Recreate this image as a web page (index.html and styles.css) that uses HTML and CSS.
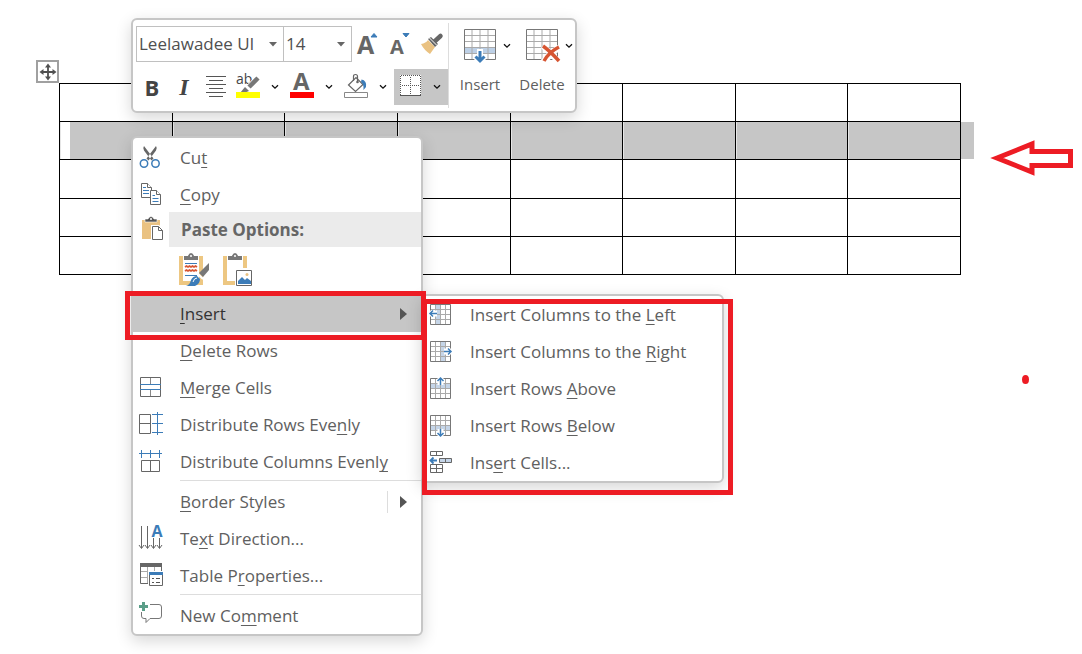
FILE: index.html
```html
<!DOCTYPE html>
<html lang="en">
<head>
<meta charset="utf-8">
<meta name="viewport" content="width=device-width, initial-scale=1">
<title>Insert rows and columns</title>
<link rel="stylesheet" href="styles.css">
</head>
<body>
<svg class="defs" aria-hidden="true">
  <symbol id="chev" viewBox="0 0 8 6"><path d="M1 1.2L4 4.2L7 1.2" fill="none" stroke="#111" stroke-width="1.300"/></symbol>
  <symbol id="tri" viewBox="0 0 8 5"><path d="M0 0H8L4 4.5Z" fill="#666"/></symbol>
  <symbol id="sub" viewBox="0 0 7 12"><path d="M0 0L7 6L0 12Z" fill="#555"/></symbol>
  <symbol id="grid" viewBox="0 0 24 24"><path d="M6.5 2V22M11.5 2V22M16.5 2V22M1 6.500H22M1 11.500H22M1 16.500H22" stroke="#aaa" fill="none"/><path d="M1.500 1.500H21.500V21.500H1.500Z" stroke="#777" fill="none"/></symbol>
</svg>

<main class="document">
  <table class="sheet" aria-label="Document table">
    <tbody>
      <tr><td></td><td></td><td></td><td></td><td></td><td></td><td></td><td></td></tr>
      <tr class="selected"><td></td><td></td><td></td><td></td><td></td><td></td><td></td><td></td></tr>
      <tr class="tall"><td></td><td></td><td></td><td></td><td></td><td></td><td></td><td></td></tr>
      <tr><td></td><td></td><td></td><td></td><td></td><td></td><td></td><td></td></tr>
      <tr><td></td><td></td><td></td><td></td><td></td><td></td><td></td><td></td></tr>
    </tbody>
  </table>
  <button class="move-handle" aria-label="Move table">
    <svg width="18" height="18" viewBox="0 0 18 18"><path d="M9 2V16M2 9H16" stroke="#505050" stroke-width="1.800"/><path d="M9 .5L12 4.500H6ZM9 17.500L12 13.500H6ZM.5 9L4.500 6V12ZM17.500 9L13.500 6V12Z" fill="#505050"/></svg>
  </button>
  <button class="size-handle" aria-label="Resize table"></button>
</main>

<section class="mini-toolbar" role="toolbar" aria-label="Formatting">
  <div class="format">
    <div class="format-row">
      <label class="combo combo-font"><select aria-label="Font"><option>Leelawadee UI</option></select><svg width="8" height="5"><use href="#tri"/></svg></label>
      <label class="combo combo-size"><select aria-label="Font size"><option>14</option></select><svg width="8" height="5"><use href="#tri"/></svg></label>
      <button class="tool" aria-label="Grow font"><svg width="24" height="24" viewBox="0 0 24 24"><text x="1" y="22" class="letter" font-size="25">A</text><path d="M15 5L18 1.500L21 5Z" fill="#3c7cb8" stroke="#3c7cb8"/></svg></button>
      <button class="tool" aria-label="Shrink font"><svg width="24" height="24" viewBox="0 0 24 24"><text x="2" y="22" class="letter" font-size="20">A</text><path d="M15 1.500H21L18 5Z" fill="#3c7cb8" stroke="#3c7cb8"/></svg></button>
      <button class="tool" aria-label="Format painter"><svg width="24" height="24" viewBox="0 0 24 24"><path d="M1 12Q6 11 8 8L15 15L10 22Q4 18 1 12Z" fill="#eac282"/><path d="M8 7L11 5L18 12L15 15Z" fill="#666"/><path d="M14 10L20.500 4" stroke="#666" stroke-width="4.500" stroke-linecap="round"/><path d="M9.500 6L16.500 13" stroke="#fff" stroke-width="1"/></svg></button>
    </div>
    <div class="format-row">
      <button class="tool bold" aria-label="Bold">B</button>
      <button class="tool italic" aria-label="Italic">I</button>
      <button class="tool" aria-label="Center"><svg width="20" height="22" viewBox="0 0 20 22"><path d="M0 .5H20M3 4.500H17M0 8.500H20M3 12.500H17M0 16.500H20M3 20.500H17" stroke="#555"/></svg></button>
      <button class="split" aria-label="Highlight color"><svg width="26" height="26" viewBox="0 0 26 26"><text x="1" y="10" font-size="14" fill="#444" font-family="Open Sans, sans-serif">ab</text><path d="M13 14L23.500 3.500" stroke="#fff" stroke-width="6"/><path d="M14 13L23 4" stroke="#777" stroke-width="4.500"/><path d="M10 13L14 17L9 19H5Z" fill="#777"/><path d="M10 11L16 17" stroke="#fff"/><path d="M1 18H25V24H1Z" fill="#ff0"/></svg><svg width="8" height="6"><use href="#chev"/></svg></button>
      <button class="split" aria-label="Font color"><svg width="26" height="26" viewBox="0 0 26 26"><text x="4" y="16" class="letter" font-size="24">A</text><path d="M1 18H25V24H1Z" fill="#f00"/></svg><svg width="8" height="6"><use href="#chev"/></svg></button>
      <button class="split" aria-label="Shading"><svg width="26" height="26" viewBox="0 0 26 26"><path d="M5.500 11L13 3.500L20 10.500L12.500 17.500Z" fill="#fff" stroke="#666" stroke-width="1.200"/><path d="M10.500 7V2.500Q10.500 .5 12.500 .5T14.500 2.500V7" fill="none" stroke="#666" stroke-width="1.200"/><circle cx="14.500" cy="8" r="1.300" fill="#666"/><path d="M18.500 5.500Q24 6.500 23 13L20.500 16Q21 10 18 8Z" fill="#3c7cb8"/><path d="M1.500 18.500H24.500V23.500H1.500Z" fill="#fff" stroke="#888"/></svg><svg width="8" height="6"><use href="#chev"/></svg></button>
      <button class="split active" aria-label="Borders"><svg width="26" height="26" viewBox="0 0 26 26"><path d="M3 1H24V22H3Z" fill="#fff"/><path d="M3.500 21V1.500H23.500V21M13.500 3V21M5 11.500H23" fill="none" stroke="#555" stroke-dasharray="1 1"/><path d="M3 21.500H24" stroke="#555"/></svg><svg width="8" height="6"><use href="#chev"/></svg></button>
    </div>
  </div>
  <div class="table-tools">
    <button class="large"><span class="large-icon"><svg width="34" height="36" viewBox="0 0 34 36"><path d="M1 19.500H33V25.500H1Z" fill="#bdd0e6"/><path d="M9 2V32M17 2V32M25 2V32M1 7.500H33M1 13.500H33M1 19.500H33M1 25.500H33" stroke="#aaa"/><path d="M1.500 1.500H32.500V31.500H1.500Z" fill="none" stroke="#777"/><path d="M17 21V34M12 28L17 33L22 28" fill="none" stroke="#fff" stroke-width="6"/><path d="M17 23V33M12.500 28.500L17 33L21.500 28.500" fill="none" stroke="#3c7cb8" stroke-width="3"/></svg><svg width="8" height="6"><use href="#chev"/></svg></span><span>Insert</span></button>
    <button class="large"><span class="large-icon"><svg width="34" height="36" viewBox="0 0 34 36"><path d="M9 2V32M17 2V32M25 2V32M1 7.500H33M1 13.500H33M1 19.500H33M1 25.500H33" stroke="#aaa"/><path d="M1.500 1.500H32.500V31.500H1.500Z" fill="none" stroke="#777"/><path d="M18 18L34 34M34 19L18 34" stroke="#fff" stroke-width="6"/><path d="M18 18Q25 23 34 33M34 19Q24 24 19 33" fill="none" stroke="#d65532" stroke-width="3.500"/></svg><svg width="8" height="6"><use href="#chev"/></svg></span><span>Delete</span></button>
  </div>
</section>

<nav class="menu context-menu" aria-label="Table menu">
  <button class="item"><svg class="icon" viewBox="0 0 24 24"><path d="M5 0Q3.500 2 5 4.500L12.500 14.500L14.500 12.500ZM17 0Q18.500 2 17 4.500L9.500 14.500L7.500 12.500Z" fill="#666"/><circle cx="5" cy="17.500" r="3.700" fill="#fff" stroke="#3c7cb8" stroke-width="1.500"/><circle cx="16.500" cy="17.500" r="3.700" fill="#fff" stroke="#3c7cb8" stroke-width="1.500"/></svg><span>Cu<u>t</u></span></button>
  <button class="item"><svg class="icon" viewBox="0 0 24 24"><g fill="#fff" stroke="#666"><path d="M2.500 .5H8.500L12.500 4.500V14.500H2.500Z"/><path d="M8.500 .5V4.500H12.500" /><path d="M11.500 7.500H17.500L21.500 11.500V21.500H11.500Z"/><path d="M17.500 7.500V11.500H21.500"/></g><path d="M4 4.500H7M4 7.500H10M4 10.500H10M13.500 12.500H16M13.500 15.500H19.500M13.500 18.500H19.500" stroke="#3c7cb8"/></svg><span><u>C</u>opy</span></button>
  <div class="heading"><svg class="icon" viewBox="0 0 24 24"><path d="M3 2H21V21H3Z" fill="#eac282"/><path d="M6 4V1H9Q10-1.500 12-1.500T15 1H18V4Z" fill="#555" stroke="#fff" stroke-width=".6"/><circle cx="12" cy="1" r="1" fill="#fff"/><path d="M12 7H20L25 12V24H12Z" fill="#fff"/><path d="M13.500 8.500H19.500L23.500 12.500V21.500H13.500Z" fill="#fff" stroke="#666"/><path d="M19.500 8.500V12.500H23.500" fill="none" stroke="#666"/></svg><h2>Paste Options:</h2></div>
  <div class="paste-options">
    <button aria-label="Keep source formatting"><svg width="32" height="36" viewBox="0 0 32 36"><path d="M2 5H22V30H2Z" fill="#fff" stroke="#edc782" stroke-width="4"/><path d="M4 2H20V8H4Z" fill="#fff"/><path d="M5 7V3H9Q10 0 12 0T15 3H19V7Z" fill="#777"/><circle cx="12" cy="3" r="1" fill="#fff"/><path d="M6 10.500H18M6 22.500H18" stroke="#3c7cb8"/><path d="M6 14L7.500 13L9 14L10.500 13L12 14L13.500 13L15 14L16.500 13L18 14M6 18L7.500 17L9 18L10.500 17L12 18L13.500 17L15 18L16.500 17L18 18" fill="none" stroke="#d65532" stroke-width="1.800"/><path d="M30 10V17L24 24L20 20Z" fill="#777"/><path d="M18 20L24 26" stroke="#fff" stroke-width="2"/><path d="M7 33Q11 32 12 27Q14 23 18 23L21 26Q21 31 16 33Z" fill="#3c7cb8"/><path d="M14 29Q15 25 18 25" fill="none" stroke="#fff"/></svg></button>
    <button aria-label="Picture"><svg width="32" height="36" viewBox="0 0 32 36"><path d="M2 5H22V30H2Z" fill="#fff" stroke="#edc782" stroke-width="4"/><path d="M4 2H20V8H4Z" fill="#fff"/><path d="M5 7V3H9Q10 0 12 0T15 3H19V7Z" fill="#777"/><circle cx="12" cy="3" r="1" fill="#fff"/><path d="M12 15H32V34H12Z" fill="#fff"/><path d="M13.500 17.500H28.500V32.500H13.500Z" fill="#fff" stroke="#666"/><path d="M15 31V28L19 24L22 27L24 25L28 28V31Z" fill="#3c7cb8"/><circle cx="24" cy="21.500" r="1.500" fill="#eac282"/></svg></button>
  </div>
  <button class="item open" aria-haspopup="menu" aria-expanded="true"><span class="icon"></span><span><u>I</u>nsert</span><svg class="arrow" width="7" height="12"><use href="#sub"/></svg></button>
  <button class="item"><span class="icon"></span><span><u>D</u>elete Rows</span></button>
  <button class="item"><svg class="icon" viewBox="0 0 24 24"><path d="M1.500 1.500H21.500V20.500H1.500Z" fill="none" stroke="#666"/><path d="M11.500 2V8M11.500 14V20" stroke="#888"/><path d="M1 8.500H22M1 13.500H22" stroke="#3c7cb8"/></svg><span><u>M</u>erge Cells</span></button>
  <button class="item"><svg class="icon" viewBox="0 0 24 24"><path d="M.5 1.500H11.500V20.500H.5ZM.5 10.500H12" fill="none" stroke="#666"/><path d="M18.500 -1V22M13 1.500H24M13 10.500H24M13 19.500H24" stroke="#3c7cb8"/></svg><span>Distribute Rows Eve<u>n</u>ly</span></button>
  <button class="item"><svg class="icon" viewBox="0 0 24 24"><path d="M2.500 10.500H20.500V21.500H2.500ZM11.500 10.500V21.500" fill="none" stroke="#666"/><path d="M0 3.500H23M2.500 0V8M11.500 0V8M20.500 0V8" stroke="#3c7cb8"/></svg><span>Distribute Columns Evenl<u>y</u></span></button>
  <hr>
  <button class="item split-item"><span class="icon"></span><span><u>B</u>order Styles</span><svg class="arrow" width="7" height="12"><use href="#sub"/></svg></button>
  <button class="item"><svg class="icon" viewBox="0 0 24 24"><path d="M2.500 -1V21M8.500 -1V21M14.500 11V21M20.500 11V21M0 18L2.500 21.500L5 18M6 18L8.500 21.500L11 18M12 18L14.500 21.500L17 18M18 18L20.500 21.500L23 18" fill="none" stroke="#666"/><text x="12.500" y="10" font-size="16" font-weight="700" font-family="Open Sans, sans-serif" fill="#3c7cb8">A</text></svg><span>Te<u>x</u>t Direction...</span></button>
  <button class="item"><svg class="icon" viewBox="0 0 24 24"><path d="M1 7.500H22M1 13.500H10M8.500 3V19M15.500 3V9" stroke="#aaa"/><path d="M1.500 -.5H22.500V19.500H1.500Z" fill="none" stroke="#666"/><path d="M1 -1H23V3H1Z" fill="#666"/><path d="M9 7H24V23H9Z" fill="#fff"/><path d="M10.500 8.500H23.500V21.500H10.500Z" fill="#fff" stroke="#666"/><path d="M10 8H24V11H10Z" fill="#3c7cb8"/><path d="M13 14.500H15M17 14.500H21M13 18.500H15M17 18.500H21" stroke="#555"/></svg><span>Table P<u>r</u>operties...</span></button>
  <hr>
  <button class="item"><svg class="icon" viewBox="0 0 24 24"><path d="M11 .5H20Q22.500 .5 22.500 3V12Q22.500 14.500 20 14.500H11L7 18.500V14.500H5Q2.500 14.500 2.500 12V8" fill="none" stroke="#777"/><path d="M4.500-2V7M0 2.500H9" stroke="#5a9e88" stroke-width="3"/></svg><span>New Co<u>m</u>ment</span></button>
</nav>

<nav class="menu submenu" aria-label="Insert">
  <button class="item"><svg class="icon" viewBox="0 0 24 24"><path d="M7 2H12V22H7Z" fill="#c5d5e8"/><use href="#grid"/><path d="M0 10.500H8" stroke="#fff" stroke-width="6"/><path d="M8 10.500H1M4 7.500L1 10.500L4 13.500" fill="none" stroke="#3c7cb8" stroke-width="1.500"/></svg><span>Insert Columns to the <u>L</u>eft</span></button>
  <button class="item"><svg class="icon" viewBox="0 0 24 24"><path d="M12 2H17V22H12Z" fill="#c5d5e8"/><use href="#grid"/><path d="M15 11.500H24" stroke="#fff" stroke-width="6"/><path d="M15 11.500H22M19 8.500L22 11.500L19 14.500" fill="none" stroke="#3c7cb8" stroke-width="1.500"/></svg><span>Insert Columns to the <u>R</u>ight</span></button>
  <button class="item"><svg class="icon" viewBox="0 0 24 24"><path d="M2 7H22V12H2Z" fill="#c5d5e8"/><use href="#grid"/><path d="M11.500 0V8" stroke="#fff" stroke-width="6"/><path d="M11.500 8V1M8.500 4L11.500 1L14.500 4" fill="none" stroke="#3c7cb8" stroke-width="1.500"/></svg><span>Insert Rows <u>A</u>bove</span></button>
  <button class="item"><svg class="icon" viewBox="0 0 24 24"><path d="M2 12H22V17H2Z" fill="#c5d5e8"/><use href="#grid"/><path d="M11.500 15V24" stroke="#fff" stroke-width="6"/><path d="M11.500 15V22M8.500 19L11.500 22L14.500 19" fill="none" stroke="#3c7cb8" stroke-width="1.500"/></svg><span>Insert Rows <u>B</u>elow</span></button>
  <button class="item"><svg class="icon" viewBox="0 0 24 24"><path d="M1.500 .5H13.500V4.500H1.500ZM7.500 .5V4.500M1.500 13.500H13.500V21.500H1.500ZM7.500 13.500V21.500M1.500 17.500H13.500" fill="none" stroke="#666"/><path d="M10.500 7.500H22.500V11.500H10.500ZM16.500 7.500V11.500" fill="#c5d5e8" stroke="#666"/><path d="M8 9.500H1M4.500 6.500L1.500 9.500L4.500 12.500" fill="none" stroke="#3c7cb8" stroke-width="1.800"/></svg><span>Ins<u>e</u>rt Cells...</span></button>
</nav>

<div class="mark mark-insert"></div>
<div class="mark mark-submenu"></div>
<svg class="mark-arrow" width="86" height="38" viewBox="0 0 86 38" aria-hidden="true"><path d="M8 19L43 5V12.500H81.500V26.500H43V33L8 19Z" fill="#fff" stroke="#ed1c24" stroke-width="5"/></svg>
<div class="mark-dot"></div>
</body>
</html>
```
FILE: styles.css
```css
* { box-sizing: border-box; }

body {
  margin: 0;
  background: #fff;
  color: #606060;
  font: 17px/24px "Open Sans", "Noto Sans", sans-serif;
}

button {
  padding: 0;
  border: 0;
  background: none;
  color: inherit;
  font: inherit;
  cursor: pointer;
}

svg { display: block; overflow: visible; flex: none; }
.defs { position: absolute; width: 0; height: 0; }

/* Document */
.document {
  position: relative;
  margin: 83px 121px 0 59px;
}

.sheet {
  width: 100%;
  table-layout: fixed;
  border-collapse: collapse;
}

.sheet td {
  height: 38px;
  padding: 0;
  border: 1px solid #000;
}

.sheet .tall td { height: 39px; }

.selected td {
  position: relative;
  background: #c6c6c6;
  background-clip: padding-box;
  box-shadow: inset 1px 0 #e6e6e6;
}

.selected td:first-child {
  background: linear-gradient(to right, #fff 10px, #c6c6c6 10px);
  background-clip: padding-box;
}

.selected td:last-child::after {
  content: "";
  position: absolute;
  top: 0;
  bottom: 0;
  left: 100%;
  width: 13px;
  margin-left: 1px;
  background: #c6c6c6;
}

.move-handle,
.size-handle {
  position: absolute;
  display: grid;
  place-items: center;
  width: 23px;
  height: 23px;
  border: 2px solid #a0a0a0;
  background: #fff;
}

.move-handle { top: -23px; left: -23px; }
.size-handle { top: 100%; left: 100%; }

/* Floating panels */
.mini-toolbar,
.menu {
  position: absolute;
  border: 2px solid #c6c6c6;
  border-radius: 6px;
  background: #fff;
  box-shadow: 0 5px 16px rgba(0, 0, 0, .16);
}

/* Mini toolbar */
.mini-toolbar {
  top: 18px;
  left: 131px;
  display: flex;
  padding: 3px 2px 3px 3px;
}

.format {
  display: grid;
  gap: 7px;
  padding: 3px 0;
}

.format-row { display: flex; height: 36px; }

.combo {
  display: grid;
  grid-template-columns: 1fr 14px;
  align-items: center;
  border: 1px solid #c0c0c0;
}

.combo select {
  grid-area: 1 / 1 / 2 / 3;
  width: 100%;
  height: 100%;
  padding: 0 0 0 2px;
  border: 0;
  appearance: none;
  background: none;
  color: #505050;
  font: inherit;
}

.combo svg { grid-area: 1 / 2; pointer-events: none; }
.combo-font { width: 148px; }
.combo-size { width: 69px; margin-left: -1px; }

.tool {
  display: grid;
  place-items: center;
  width: 32px;
}

.letter {
  fill: #666;
  font-family: "Open Sans", sans-serif;
  font-weight: 700;
}

.bold { color: #444; font-size: 22px; font-weight: 700; }
.italic { color: #444; font: italic 700 24px/24px "Liberation Serif", serif; }

.split {
  display: grid;
  grid-template-columns: 32px 22px;
  place-items: center;
}

.split.active { background: #c6c6c6; }

.table-tools {
  display: flex;
  align-items: start;
  border-left: 1px solid #ddd;
}

.large {
  display: grid;
  gap: 8px;
  width: 62px;
  padding-top: 5px;
  font-size: 15px;
}

.large-icon {
  display: grid;
  grid-template-columns: 1fr auto 1fr;
  align-items: center;
}

.large-icon svg:first-child { grid-column: 2; }
.large-icon svg:last-child { justify-self: end; }

/* Menus */
.menu { display: flex; flex-direction: column; }

.context-menu {
  top: 136px;
  left: 131px;
  width: 292px;
  padding-top: 1px;
}

.submenu { top: 294px; left: 421px; width: 303px; }

.item {
  display: flex;
  align-items: center;
  gap: 17px;
  height: 37px;
  padding: 0 14px 0 6px;
  text-align: left;
  white-space: nowrap;
}

.icon { flex: none; width: 24px; height: 24px; }

u {
  text-decoration-thickness: 1px;
  text-underline-offset: 3px;
  text-decoration-skip-ink: none;
}

.open { background: #c6c6c6; color: #333; }
.arrow { margin-left: auto; }

.split-item .arrow {
  width: 20px;
  height: 22px;
  padding: 5px 0 5px 12px;
  border-left: 1px solid #ddd;
}

.heading {
  display: flex;
  align-items: center;
  gap: 6px;
  height: 35px;
  margin-top: -1px;
  padding-left: 6px;
}

.heading h2 {
  flex: 1;
  margin: 0;
  padding-left: 12px;
  background: #ebebeb;
  color: #666;
  font-size: 17px;
  line-height: 35px;
}

.paste-options {
  display: flex;
  gap: 12px;
  height: 48px;
  padding: 6px 0 6px 46px;
}

hr {
  width: 241px;
  height: 3px;
  margin: 0 0 0 auto;
  border: 0;
  border-top: 1px solid #ddd;
}

/* Annotations */
.mark { position: absolute; border: 5px solid #ed1c24; pointer-events: none; }
.mark-insert { top: 291px; left: 125px; width: 301px; height: 49px; }
.mark-submenu { top: 299px; left: 422px; width: 311px; height: 196px; }
.mark-arrow { position: absolute; top: 139px; left: 989px; }

.mark-dot {
  position: absolute;
  top: 375px;
  left: 1022px;
  width: 7px;
  height: 9px;
  border-radius: 50%;
  background: #ed1c24;
}
```
